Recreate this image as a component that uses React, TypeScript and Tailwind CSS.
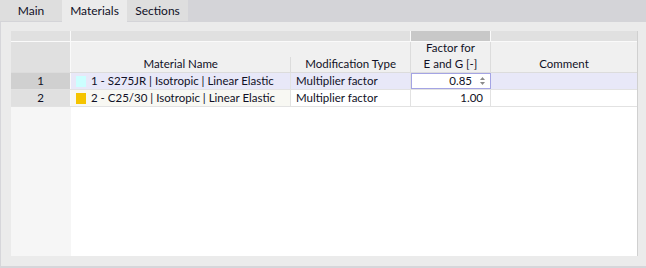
const font = { fontFamily: 'Lato, "Noto Sans", sans-serif' };

const rows = [
	{
		no: "1",
		swatch: "bg-[#ccffff]",
		name: "1 - S275JR | Isotropic | Linear Elastic",
		type: "Multiplier factor",
		factor: "0.85",
		selected: true,
	},
	{
		no: "2",
		swatch: "bg-[#f5c400]",
		name: "2 - C25/30 | Isotropic | Linear Elastic",
		type: "Multiplier factor",
		factor: "1.00",
		selected: false,
	},
];

function Tab({ label, width, active }: { label: string; width: string; active?: boolean }) {
	return (
		<div
			className={`flex items-center justify-center ${width} ${
				active ? "h-[22px] bg-[#ebebeb]" : "h-[21px] bg-[#dedede]"
			}`}
		>
			{label}
		</div>
	);
}

function Spinner() {
	return (
		<svg width="7" height="10" viewBox="0 0 7 10" className="ml-[7px] mr-[4px]">
			<path d="M3.5 1 L6 4 L1 4 Z" fill="#8a8a8a" />
			<path d="M3.5 9 L6 6 L1 6 Z" fill="#8a8a8a" />
		</svg>
	);
}

export default function App() {
	return (
		<div
			className="flex h-[268px] w-[646px] flex-col overflow-hidden whitespace-nowrap bg-[#ebebeb] text-[11.5px] leading-[16px] text-[#101026]"
			style={font}
		>
			{/* tab strip */}
			<div className="flex h-[22px] shrink-0 items-start bg-[#d4d4d8] text-[12px]">
				<Tab label="Main" width="w-[62px]" />
				<Tab label="Materials" width="w-[65px]" active />
				<Tab label="Sections" width="w-[61px]" />
			</div>

			{/* panel */}
			<div className="flex flex-1 flex-col border-b-2 border-l border-[#d6d6da] pb-[10px] pl-[10px] pr-[8px] pt-[9px]">
				<div className="flex flex-1 flex-col border-r border-[#d0d0d0]">
					{/* top band */}
					<div className="flex h-[10px] shrink-0">
						<div className="w-[60px] border-r border-[#fafafa] bg-[#e0e0e0]" />
						<div className="w-[340px] border-r border-[#fafafa] bg-[#e0e0e0]" />
						<div className="w-[80px] border-r border-[#fafafa] bg-[#c8c8c8]" />
						<div className="flex-1 bg-[#e0e0e0]" />
					</div>
					<div className="h-px shrink-0 bg-[#fafafa]" />

					{/* header */}
					<div className="flex h-[31px] shrink-0 border-b border-[#dcdcdc] bg-[#f0f0f0]">
						<div className="w-[60px] border-r border-[#fafafa] bg-[#e0e0e0]" />
						<div className="flex w-[340px] items-end border-r border-[#dcdcdc]">
							<div className="w-[220px] text-center">Material Name</div>
							<div className="flex h-[15px] w-[120px] items-end justify-center border-l border-[#dcdcdc]">
								Modification Type
							</div>
						</div>
						<div className="flex w-[80px] flex-col items-center justify-end border-r border-[#dcdcdc]">
							<div>Factor for</div>
							<div>E and G [-]</div>
						</div>
						<div className="flex flex-1 items-end justify-center">Comment</div>
					</div>

					{/* rows */}
					{rows.map((r) => (
						<div key={r.no} className="flex h-[17px] shrink-0 border-b border-[#e2e2e2]">
							<div
								className={`flex w-[60px] items-center justify-center border-r border-[#fafafa] ${
									r.selected ? "bg-[#d0d0d0]" : "bg-[#e0e0e0]"
								}`}
							>
								{r.no}
							</div>
							<div
								className={`flex w-[220px] items-center border-r border-[#e2e2e2] pl-[5px] ${
									r.selected ? "bg-[#e8e8f8]" : "bg-[#f8f8f3]"
								}`}
							>
								<span className={`mr-[5px] h-[11px] w-[10px] shrink-0 ${r.swatch}`} />
								{r.name}
							</div>
							<div
								className={`flex w-[120px] items-center border-r border-[#e2e2e2] pl-[5px] ${
									r.selected ? "bg-[#e8e8f8]" : "bg-white"
								}`}
							>
								{r.type}
							</div>
							{r.selected ? (
								<div className="flex w-[80px] items-center justify-end border border-[#a4a4e4] bg-white">
									{r.factor}
									<Spinner />
								</div>
							) : (
								<div className="flex w-[80px] items-center justify-end border-r border-[#e2e2e2] bg-white pr-[7px]">
									{r.factor}
								</div>
							)}
							<div className={`flex-1 ${r.selected ? "bg-[#e8e8f8]" : "bg-white"}`} />
						</div>
					))}

					{/* empty area */}
					<div className="flex flex-1">
						<div className="w-[60px] bg-[#f6f6f6]" />
						<div className="flex-1 bg-white" />
					</div>
				</div>
			</div>
		</div>
	);
}
